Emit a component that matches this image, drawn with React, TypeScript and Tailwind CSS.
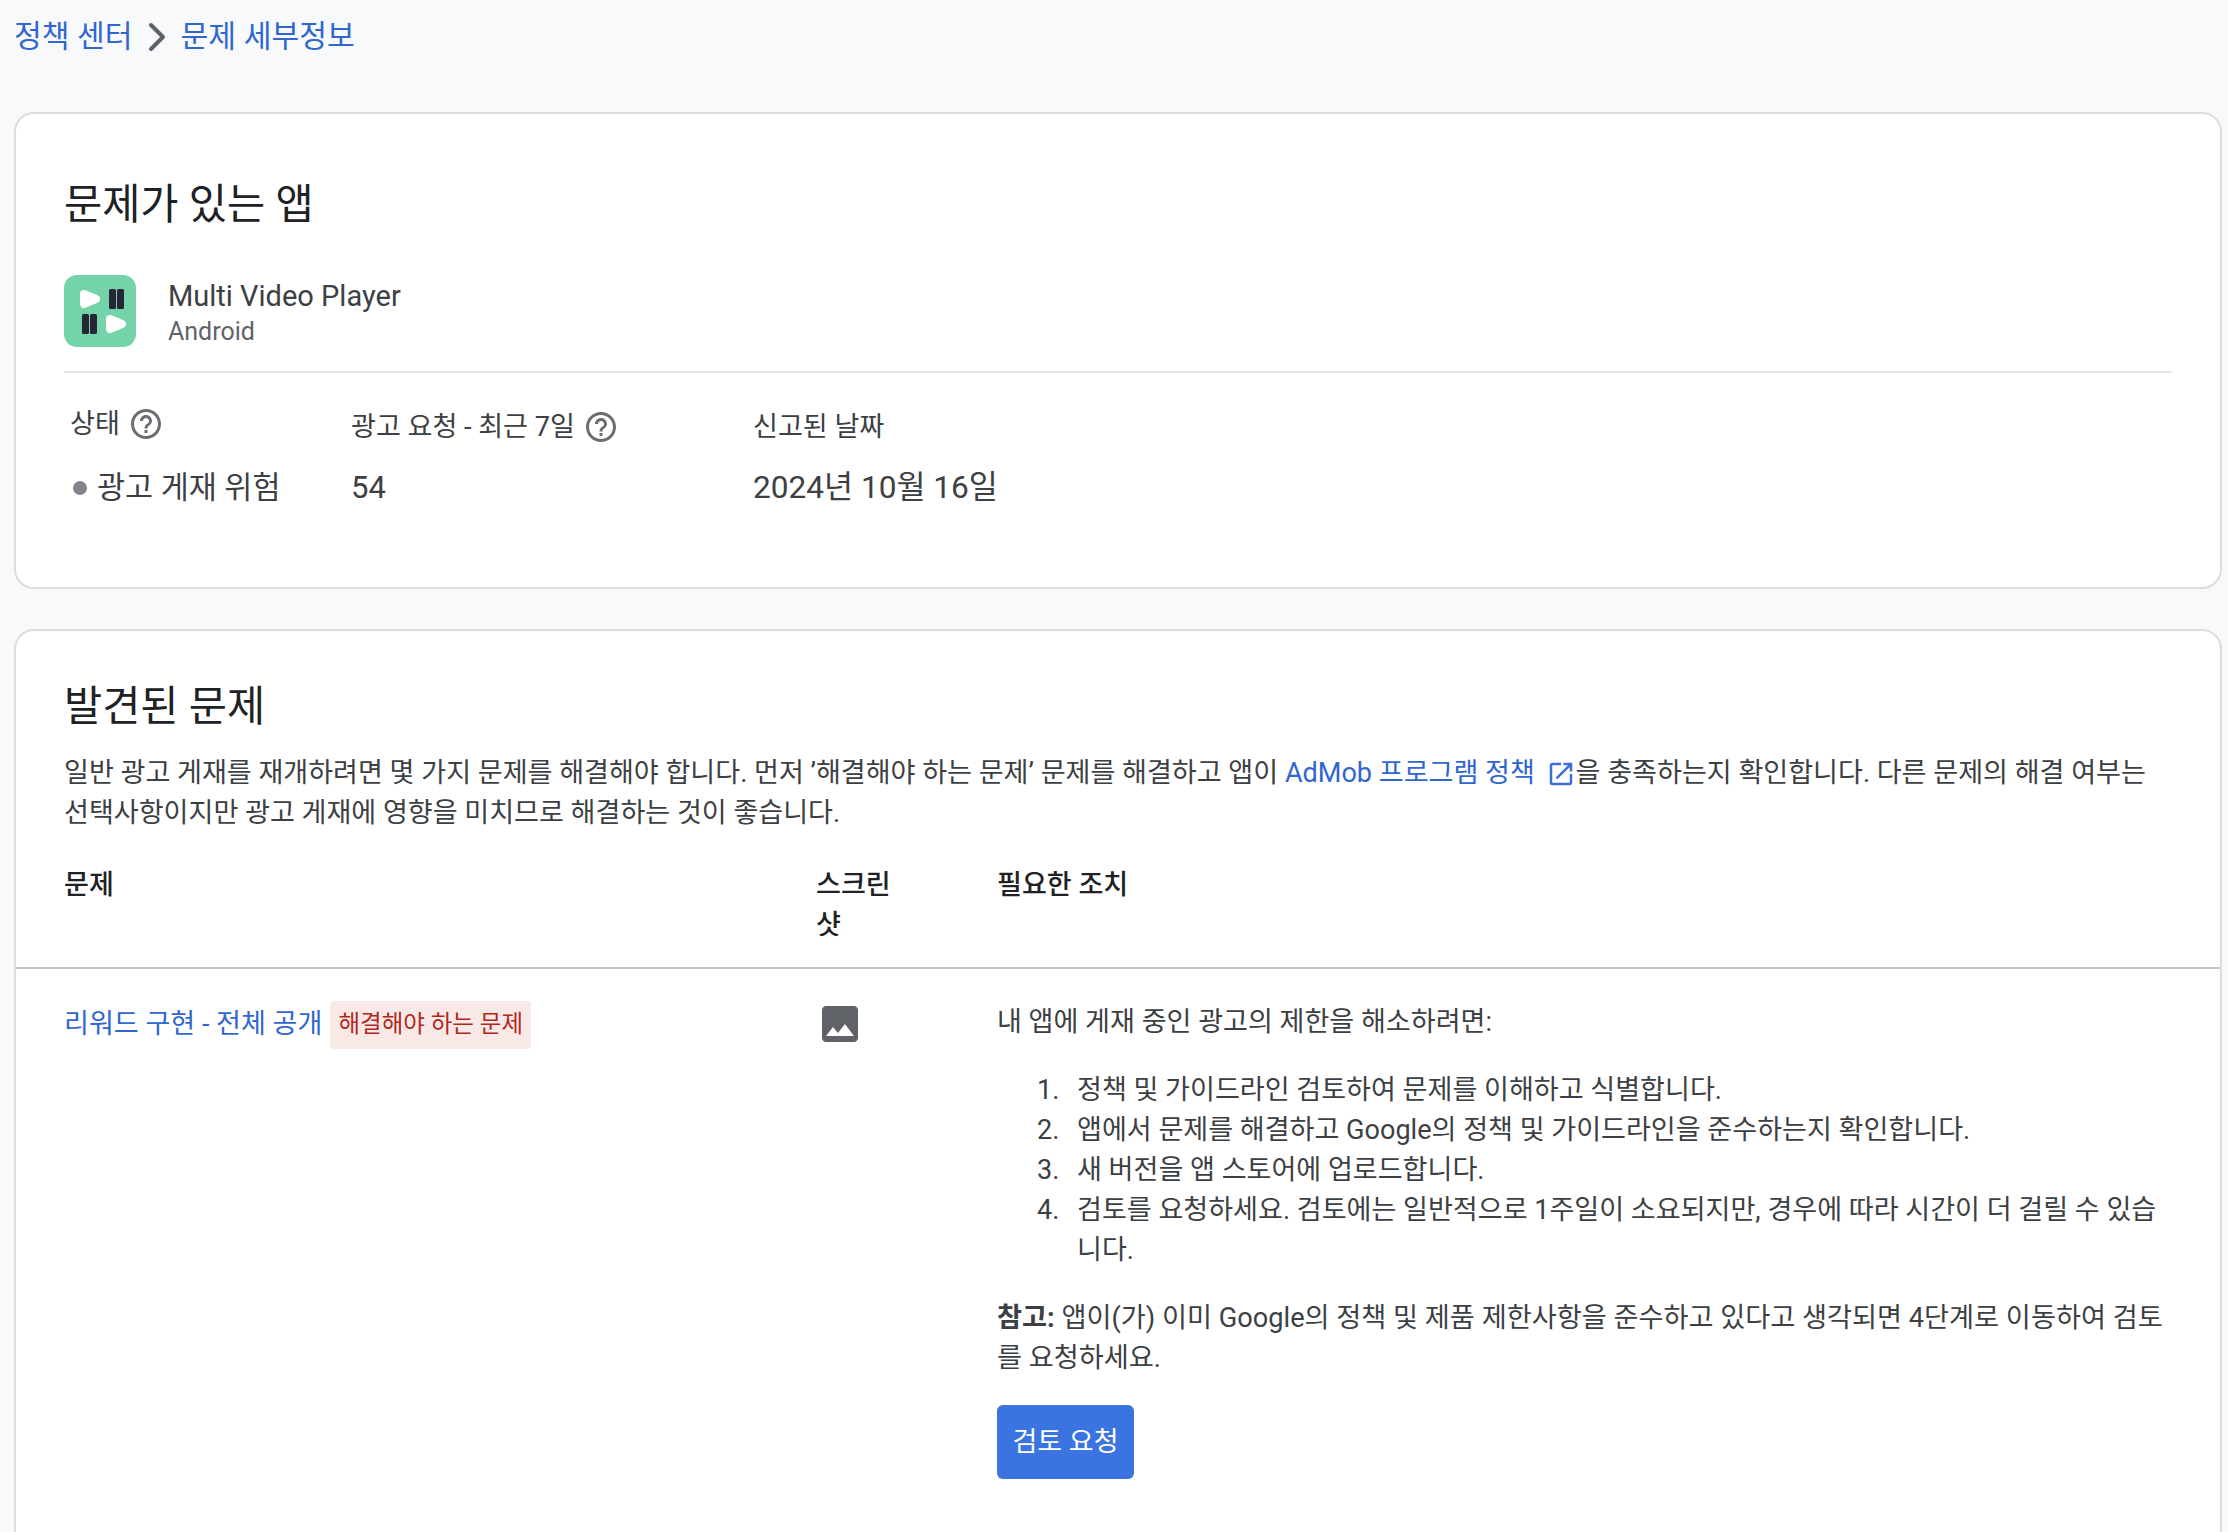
import { ChevronRight } from "lucide-react";

const font = "font-['Roboto','Noto_Sans_CJK_KR',sans-serif]";

function HelpIcon() {
  return (
    <svg viewBox="0 0 24 24" className="w-[36px] h-[36px] fill-[#6a6d71]">
      <path d="M11 18h2v-2h-2v2zm1-16C6.48 2 2 6.48 2 12s4.48 10 10 10 10-4.48 10-10S17.52 2 12 2zm0 18c-4.41 0-8-3.59-8-8s3.59-8 8-8 8 3.59 8 8-3.59 8-8 8zm0-14c-2.21 0-4 1.79-4 4h2c0-1.1.9-2 2-2s2 .9 2 2c0 2-3 1.75-3 5h2c0-2.25 3-2.5 3-5 0-2.21-1.79-4-4-4z" />
    </svg>
  );
}

function AppIcon() {
  return (
    <svg viewBox="0 0 72 72" className="w-[72px] h-[72px] shrink-0">
      <rect width="72" height="72" rx="13" fill="#74d3a8" />
      <path d="M20 19 L32 24 L20 29 Z" fill="#fff" stroke="#fff" strokeWidth="8" strokeLinejoin="round" />
      <rect x="45" y="14" width="7" height="20" rx="1.500" fill="#262636" />
      <rect x="53" y="14" width="7" height="20" rx="1.500" fill="#262636" />
      <rect x="18" y="39" width="7" height="20" rx="1.500" fill="#262636" />
      <rect x="26" y="39" width="7" height="20" rx="1.500" fill="#262636" />
      <path d="M46 44 L58 49 L46 54 Z" fill="#fff" stroke="#fff" strokeWidth="8" strokeLinejoin="round" />
    </svg>
  );
}

function ImageIcon() {
  return (
    <svg viewBox="0 0 24 24" className="w-[48px] h-[48px] fill-[#5f6368]">
      <path d="M21 19V5c0-1.100-.9-2-2-2H5c-1.100 0-2 .9-2 2v14c0 1.100.9 2 2 2h14c1.100 0 2-.9 2-2zM8.500 13.500l2.500 3.010L14.500 12l4.500 6H5l3.500-4.500z" />
    </svg>
  );
}

function ExternalIcon() {
  return (
    <svg viewBox="0 0 24 24" className="inline-block w-[30px] h-[30px] ml-[4px] fill-[#3b6fd9] align-[-7px]">
      <path d="M19 19H5V5h7V3H5a2 2 0 0 0-2 2v14a2 2 0 0 0 2 2h14c1.100 0 2-.9 2-2v-7h-2v7zM14 3v2h3.590l-9.830 9.830 1.410 1.410L19 6.410V10h2V3h-7z" />
    </svg>
  );
}

const steps = [
  "정책 및 가이드라인 검토하여 문제를 이해하고 식별합니다.",
  "앱에서 문제를 해결하고 Google의 정책 및 가이드라인을 준수하는지 확인합니다.",
  "새 버전을 앱 스토어에 업로드합니다.",
  "검토를 요청하세요. 검토에는 일반적으로 1주일이 소요되지만, 경우에 따라 시간이 더 걸릴 수 있습니다.",
];

export default function App() {
  return (
    <div className={`${font} w-[2228px] h-[1532px] overflow-hidden bg-[#f8f9fa] pl-[14px] pr-[6px] text-[#3c4043] text-[27.070px] leading-[40px]`}>
      {/* Breadcrumb */}
      <div className="h-[112px] pt-[17px] flex items-start text-[30.200px] leading-[40px] text-[#2f66d0]">
        <span>정책 센터</span>
        <ChevronRight className="w-[48px] h-[48px] -mt-[4px] text-[#5f6368]" strokeWidth={2} />
        <span>문제 세부정보</span>
      </div>

      {/* App card */}
      <div className="h-[477px] bg-white border-2 border-[#dadce0] rounded-[20px] px-[48px] pt-[65px]">
        <h2 className="text-[41.500px] leading-[52px] text-[#202124]">문제가 있는 앱</h2>
        <div className="flex items-center gap-[32px] mt-[43px] pb-[23px] border-b-2 border-[#e4e5e7]">
          <AppIcon />
          <div>
            <div className="text-[29px] leading-[40px] mt-[2px]">Multi Video Player</div>
            <div className="text-[25px] leading-[32px] text-[#5f6368]">Android</div>
          </div>
        </div>
        <div className="flex mt-[31px]">
          <div className="w-[287px] pl-[6px]">
            <div className="flex items-center gap-[8px] h-[40px]">상태 <HelpIcon /></div>
            <div className="flex items-center gap-[10px] mt-[24px] text-[30.500px] leading-[40px]">
              <span className="ml-[3px] w-[14px] h-[14px] rounded-full bg-[#80868b]" />
              광고 게재 위험
            </div>
          </div>
          <div className="w-[402px]">
            <div className="flex items-center gap-[8px] h-[40px] mt-[3px]">광고 요청 - 최근 7일 <HelpIcon /></div>
            <div className="mt-[21px] text-[31px] leading-[40px]">54</div>
          </div>
          <div>
            <div className="h-[40px] mt-[3px]">신고된 날짜</div>
            <div className="mt-[21px] text-[31.600px] leading-[40px]">2024년 10월 16일</div>
          </div>
        </div>
      </div>

      {/* Issues card */}
      <div className="mt-[40px] h-[1000px] bg-white border-2 border-[#dadce0] rounded-[20px] pt-[50px]">
        <div className="px-[48px]">
          <h2 className="text-[41.500px] leading-[52px] text-[#202124]">발견된 문제</h2>
          <p className="mt-[20px] w-[2110px]">
            일반 광고 게재를 재개하려면 몇 가지 문제를 해결해야 합니다. 먼저 ’해결해야 하는 문제’ 문제를 해결하고 앱이{" "}
            <span className="text-[#2f66d0]">AdMob 프로그램 정책 <ExternalIcon /></span>을 충족하는지 확인합니다. 다른 문제의 해결 여부는 선택사항이지만 광고 게재에 영향을 미치므로 해결하는 것이 좋습니다.
          </p>
        </div>

        <div className="flex px-[48px] pt-[32px] pb-[22px] border-b-2 border-[#c4c6c9] font-medium text-[#202124]">
          <div className="w-[752px]">문제</div>
          <div className="w-[181px]">스크린<br />샷</div>
          <div>필요한 조치</div>
        </div>

        <div className="flex px-[48px] pt-[33px]">
          <div className="w-[752px] flex items-start">
            <span className="text-[#2f66d0] mt-[2px]">리워드 구현 - 전체 공개</span>
            <span className="ml-[8px] -mt-[1px] h-[48px] px-[8px] rounded-[4px] bg-[#f8e8e6] text-[#b3261e] text-[23.500px] leading-[46px]">해결해야 하는 문제</span>
          </div>
          <div className="w-[181px] -mt-[2px]"><ImageIcon /></div>
          <div className="w-[1172px]">
            <p>내 앱에 게재 중인 광고의 제한을 해소하려면:</p>
            <ol className="mt-[28px] pl-[40px]">
              {steps.map((s, i) => (
                <li key={s} className="flex">
                  <span className="w-[40px] shrink-0">{i + 1}.</span>
                  <span>{s}</span>
                </li>
              ))}
            </ol>
            <p className="mt-[28px] text-[27.200px]">
              <b className="font-bold">참고:</b> 앱이(가) 이미 Google의 정책 및 제품 제한사항을 준수하고 있다고 생각되면 4단계로 이동하여 검토를 요청하세요.
            </p>
            <button type="button" className="mt-[27px] w-[137px] h-[74px] rounded-[6px] bg-[#3b73e0] text-white text-[27px]">검토 요청</button>
          </div>
        </div>
      </div>
    </div>
  );
}
